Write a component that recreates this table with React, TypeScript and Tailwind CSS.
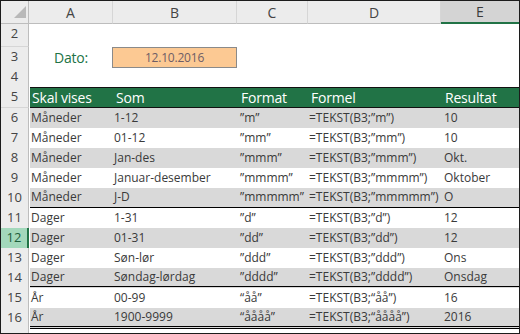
import React from "react";

type Row = {
  n: number;
  a: string;
  b: string;
  c: string;
  d: string;
  e: string;
  gray: boolean;
  line?: "single" | "double";
};

const rows: Row[] = [
  { n: 6, a: "Måneder", b: "1-12", c: "”m”", d: "=TEKST(B3;”m”)", e: "10", gray: true },
  { n: 7, a: "Måneder", b: "01-12", c: "”mm”", d: "=TEKST(B3;”mm”)", e: "10", gray: false },
  { n: 8, a: "Måneder", b: "Jan-des", c: "”mmm”", d: "=TEKST(B3;”mmm”)", e: "Okt.", gray: true },
  { n: 9, a: "Måneder", b: "Januar-desember", c: "”mmmm”", d: "=TEKST(B3;”mmmm”)", e: "Oktober", gray: false },
  { n: 10, a: "Måneder", b: "J-D", c: "”mmmmm”", d: "=TEKST(B3;”mmmmm”)", e: "O", gray: true, line: "single" },
  { n: 11, a: "Dager", b: "1-31", c: "”d”", d: "=TEKST(B3;”d”)", e: "12", gray: false },
  { n: 12, a: "Dager", b: "01-31", c: "”dd”", d: "=TEKST(B3;”dd”)", e: "12", gray: true },
  { n: 13, a: "Dager", b: "Søn-lør", c: "”ddd”", d: "=TEKST(B3;”ddd”)", e: "Ons", gray: false },
  { n: 14, a: "Dager", b: "Søndag-lørdag", c: "”dddd”", d: "=TEKST(B3;”dddd”)", e: "Onsdag", gray: true, line: "double" },
  { n: 15, a: "År", b: "00-99", c: "“åå”", d: "=TEKST(B3;“åå”)", e: "16", gray: false },
  { n: 16, a: "År", b: "1900-9999", c: "“åååå”", d: "=TEKST(B3;“åååå”)", e: "2016", gray: true, line: "double" },
];

const GRID = "grid grid-cols-[28px_84px_124px_71px_133px_78px]";

function RowHead({ n, selected }: { n?: number; selected?: boolean }) {
  return (
    <div
      className={
        selected
          ? "flex items-center justify-center bg-[#a3d8bb] text-[#1d5e3b] border-b border-[#c9c9c9] border-r-2 border-r-[#217346] text-[13px]"
          : "flex items-center justify-center bg-[#ececec] text-[#444444] border-b border-[#d6d6d6] border-r border-r-[#bdbdbd] text-[13px]"
      }
    >
      {n}
    </div>
  );
}

export default function App() {
  return (
    <div className="w-[520px] h-[334px] border border-[#1c1c1c] bg-white overflow-hidden font-['Open_Sans',sans-serif]">
      {/* column headers */}
      <div className={`${GRID} h-[20px]`}>
        <div className="relative bg-[#ececec] border-b border-r border-[#bdbdbd]">
          <svg width="28" height="20" className="absolute left-0 top-0">
            <polygon points="25,5 25,17 13,17" fill="#b9b9b9" />
          </svg>
        </div>
        {["A", "B", "C", "D"].map((l) => (
          <div
            key={l}
            className="flex items-center justify-center bg-[#ececec] border-b border-[#bdbdbd] border-r border-r-[#d6d6d6] text-[14px] text-[#444444]"
          >
            {l}
          </div>
        ))}
        <div className="flex items-center justify-center bg-[#d4d4d4] border-b-2 border-[#217346] text-[14px] text-[#3a3a3a]">
          E
        </div>
      </div>

      {/* row 2 */}
      <div className={`${GRID} h-[26px]`}>
        <RowHead n={2} />
        <div className="col-span-5" />
      </div>

      {/* row 3 */}
      <div className={`${GRID} h-[20px]`}>
        <RowHead n={3} />
        <div className="flex items-center justify-center text-[#217346] text-[14px] tracking-[-0.2px]">Dato:</div>
        <div className="flex items-center justify-center bg-[#fcc993] border border-[#8a8a8a] text-[#6e5d66] text-[12px] tracking-[-0.2px] -ml-[1px]">
          12.10.2016
        </div>
        <div className="col-span-3" />
      </div>

      {/* row 4 */}
      <div className={`${GRID} h-[20px]`}>
        <RowHead n={4} />
        <div className="col-span-5" />
      </div>

      {/* row 5 header */}
      <div className={`${GRID} h-[21px]`}>
        <RowHead n={5} />
        <div className="col-span-5 ml-[1px] grid grid-cols-[83px_124px_71px_133px_78px] bg-[#217346] border-y border-[#111111] text-white text-[14px] tracking-[-0.2px] leading-none">
          <div className="flex items-center pl-[2px]">Skal vises</div>
          <div className="flex items-center pl-[3px]">Som</div>
          <div className="flex items-center pl-[4px]">Format</div>
          <div className="flex items-center pl-[3px]">Formel</div>
          <div className="flex items-center pl-[4px]">Resultat</div>
        </div>
      </div>

      {rows.map((r) => (
        <div key={r.n} className={`${GRID} h-[20px]`}>
          <RowHead n={r.n} selected={r.n === 12} />
          <div
            className={
              "col-span-5 ml-[1px] grid grid-cols-[83px_124px_71px_133px_78px] text-[12px] text-[#3a3a3a] leading-none " +
              (r.gray ? "bg-[#d9d9d9] " : "bg-white ") +
              (r.line === "single"
                ? "border-b-2 border-black"
                : r.line === "double"
                ? "border-b-[3px] border-double border-black"
                : "")
            }
          >
            <div className="flex items-center pl-[1px] whitespace-nowrap">{r.a}</div>
            <div className="flex items-center pl-[1px] whitespace-nowrap">{r.b}</div>
            <div className="flex items-center pl-[3px] whitespace-nowrap">{r.c}</div>
            <div className="flex items-center pl-[1px] whitespace-nowrap">{r.d}</div>
            <div className="flex items-center pl-[3px] whitespace-nowrap">{r.e}</div>
          </div>
        </div>
      ))}

      {/* trailing partial row */}
      <div className={`${GRID} h-[5px]`}>
        <div className="bg-[#ececec] border-r border-[#bdbdbd]" />
        <div className="col-span-5" />
      </div>
    </div>
  );
}
